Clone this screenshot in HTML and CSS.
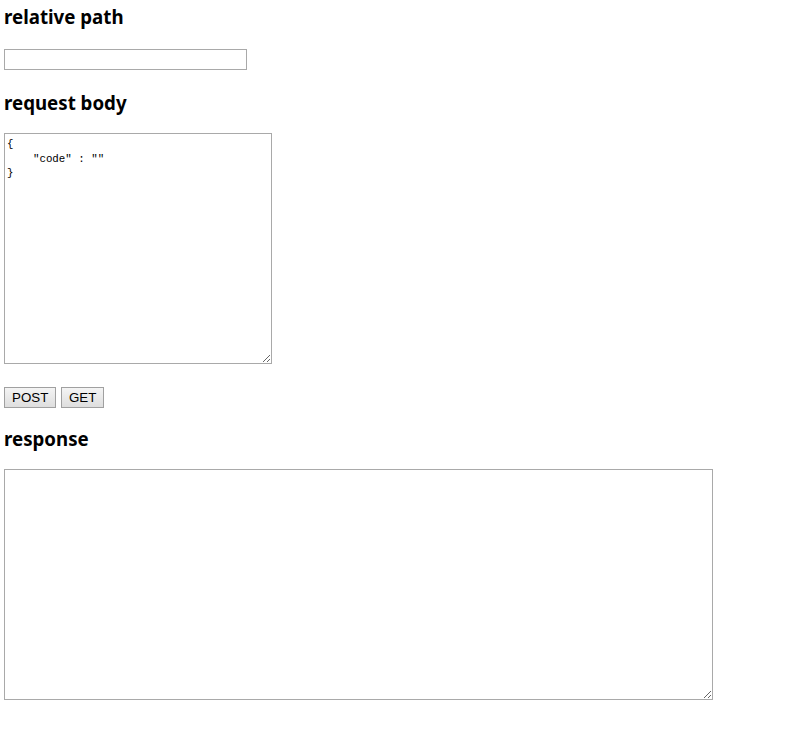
FILE: index.html
```html
<!DOCTYPE html>
<html>
<head>
<meta charset="utf-8">
<link rel="stylesheet" href="styles.css">
</head>
<body>
<h3 class="title">relative path</h3>
<input class="path" type="text">
<h3 class="title">request body</h3>
<textarea class="body-area">{
    "code" : ""
}</textarea>
<div class="buttons">
  <button class="btn">POST</button>
  <button class="btn">GET</button>
</div>
<h3 class="title">response</h3>
<textarea class="response-area"></textarea>
</body>
</html>
```
FILE: styles.css
```css
html, body {
  margin: 0;
  padding: 0;
  background: #fff;
}
body {
  padding: 4px 4px;
  display: flex;
  flex-direction: column;
  align-items: flex-start;
  font-family: "Noto Sans", sans-serif;
  color: #000;
}
.title {
  margin: 0;
  font-size: 18.7px;
  font-weight: bold;
  line-height: 25px;
  font-family: "Noto Sans", sans-serif;
}
.path {
  margin: 20px 0 20px 0;
  box-sizing: border-box;
  width: 243px;
  height: 21px;
  border: 1px solid #a9a9a9;
  padding: 1px 2px;
}
.body-area {
  margin: 18px 0 0 0;
  box-sizing: border-box;
  width: 268px;
  height: 231px;
  border: 1px solid #a9a9a9;
  padding: 3px 2px;
  font-family: "Liberation Mono", monospace;
  font-size: 10.8px;
  line-height: 14.5px;
  resize: both;
  color: #000;
}
.buttons {
  display: flex;
  gap: 5px;
  margin: 23px 0 18px 0;
}
.btn {
  box-sizing: border-box;
  height: 21px;
  padding: 0 7px;
  font-family: "Liberation Sans", Arial, sans-serif;
  font-size: 13.33px;
  border: 1px solid #a0a0a0;
  border-radius: 0;
  background: linear-gradient(#f4f4f4, #dedede);
  color: #000;
}
.btn:first-child { width: 52px; }
.btn:last-child { width: 43px; }
.response-area {
  margin: 18px 0 0 0;
  box-sizing: border-box;
  width: 709px;
  height: 231px;
  border: 1px solid #a9a9a9;
  resize: both;
}
```
